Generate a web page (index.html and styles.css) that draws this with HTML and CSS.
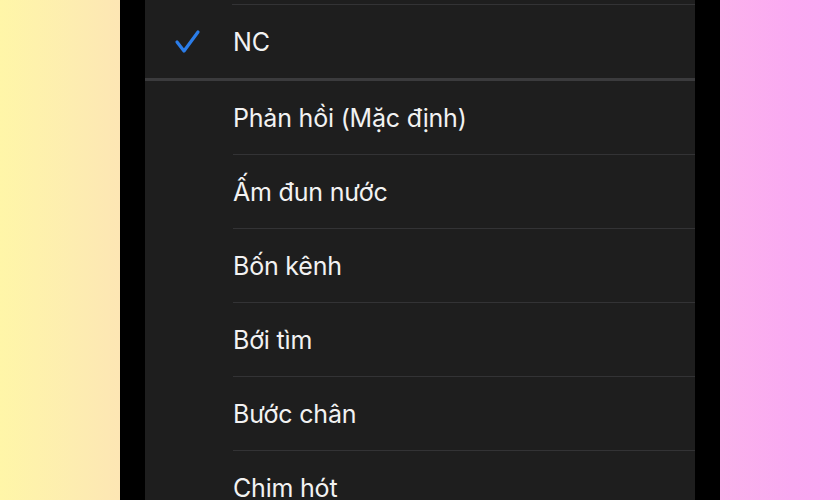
FILE: index.html
```html
<!DOCTYPE html>
<html lang="vi">
<head>
<meta charset="utf-8">
<link rel="stylesheet" href="styles.css">
</head>
<body>
<div class="stage">
  <div class="bg bg-left"></div>
  <div class="bezel"></div>
  <div class="panel">
    <div class="group group-top">
      <div class="row selected">
        <div class="check">
          <svg width="28" height="26" viewBox="0 0 28 26"><path d="M3 13 L10 22 L24 3" fill="none" stroke="#2b7de9" stroke-width="3.2" stroke-linecap="round" stroke-linejoin="round"/></svg>
        </div>
        <div class="cell last">NC</div>
      </div>
    </div>
    <div class="group">
      <div class="row"><div class="cell">Phản hồi (Mặc định)</div></div>
      <div class="row"><div class="cell">Ấm đun nước</div></div>
      <div class="row"><div class="cell">Bốn kênh</div></div>
      <div class="row"><div class="cell">Bới tìm</div></div>
      <div class="row"><div class="cell">Bước chân</div></div>
      <div class="row"><div class="cell">Chim hót</div></div>
    </div>
  </div>
  <div class="bezel"></div>
  <div class="bg bg-right"></div>
</div>
</body>
</html>
```

FILE: styles.css
```css
html, body {
  margin: 0;
  padding: 0;
  width: 840px;
  height: 500px;
  overflow: hidden;
}
.stage {
  display: flex;
  width: 840px;
  height: 500px;
  overflow: hidden;
}
.bg {
  width: 120px;
  flex: none;
}
.bg-left {
  background: linear-gradient(90deg, #fff6a8 0%, #fdedb0 60%, #fde6b4 100%);
}
.bg-right {
  background: linear-gradient(90deg, #fdb4ee 0%, #fcaaf3 60%, #fca8f6 100%);
}
.bezel {
  width: 25px;
  flex: none;
  background: #000;
}
.panel {
  width: 550px;
  flex: none;
  background: #1e1e1e;
  font-family: Inter, "Noto Sans", sans-serif;
  color: #f2f2f2;
  font-size: 25px;
}
.group-top {
  padding-top: 4px;
  border-bottom: 3px solid #3b3b3d;
}
.group-top .row {
  border-top: 1px solid #333335;
  margin-left: 87px;
}
.row {
  display: flex;
  align-items: stretch;
  height: 74px;
}
.row.selected {
  position: relative;
  height: 73px;
}
.check {
  position: absolute;
  left: -58px;
  top: 24px;
  width: 28px;
  height: 26px;
}
.cell {
  flex: 1;
  display: flex;
  align-items: center;
  margin-left: 88px;
  border-bottom: 1px solid #333335;
  letter-spacing: -0.2px;
}
.group-top .cell {
  margin-left: 1px;
  border-bottom: none;
}
```
